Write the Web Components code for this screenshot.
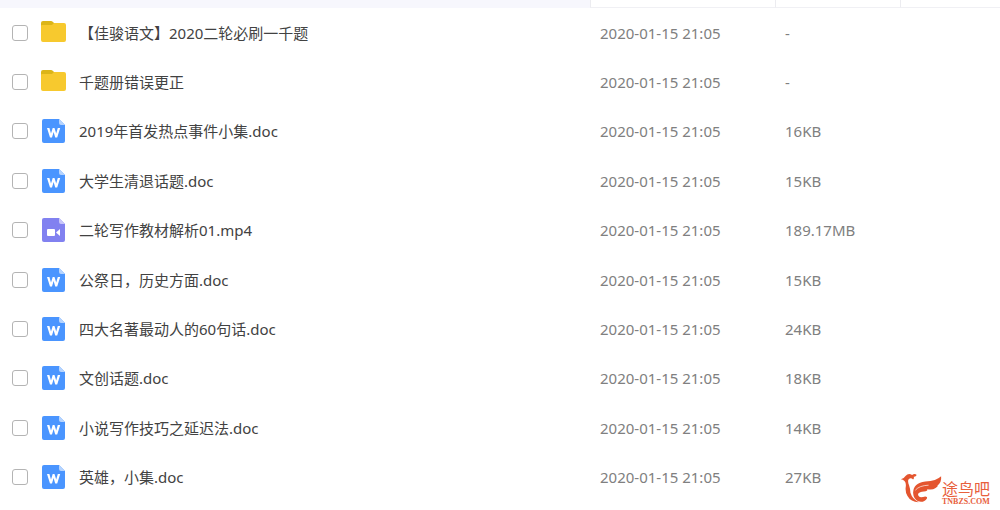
<!DOCTYPE html>
<html lang="zh-CN">
  <head>
    <meta charset="UTF-8" />
    <title>文件列表</title>
    <style>
      body {
        margin: 0;
        background: #fff;
        font-family: "Noto Sans", "Noto Sans CJK SC", sans-serif;
        font-size: 15px;
        line-height: 20px;
      }
    </style>
  </head>
  <body>
    <file-list></file-list>
    <site-mark>
      <span slot="name">途鸟吧</span>
      <span slot="domain">TNBZS.COM</span>
    </site-mark>
  </body>
  <script>
    const icons = {
      folder: `
        <path d="M0 5V2q0-2 2-2h8q1 0 2 1l2 2v4H0z" fill="#dcb518"/>
        <path d="M0 5q0-1 1-1h10l2-2h10q2 0 2 2v15q0 2-2 2H2q-2 0-2-2z" fill="#f7c92e"/>`,
      doc: `
        <path d="M3 0h15l6 6v16q0 2-2 2H3q-2 0-2-2V2q0-2 2-2z" fill="#4a95ff"/>
        <path d="M18 0l6 6h-4q-2 0-2-2z" fill="#b5d4ff"/>
        <path d="M6 9h2.400l1.600 5.500L11.700 9h1.800l1.700 5.500L16.800 9h2.400l-3 9.500h-2L12.600 13 11 18.500H9z" fill="#fff"/>`,
      video: `
        <path d="M3 0h15l6 6v16q0 2-2 2H3q-2 0-2-2V2q0-2 2-2z" fill="#8181f0"/>
        <path d="M18 0l6 6h-4q-2 0-2-2z" fill="#c8c6fa"/>
        <rect x="6" y="11" width="8" height="7" rx="1" fill="#fff"/>
        <path d="M15 14.500l4-3.500v7z" fill="#fff"/>`
    };

    // Icon for a file type
    class FileIcon extends HTMLElement {
      constructor() {
        super();
        this._shadowRoot = this.attachShadow({ mode: "open" });
      }
      connectedCallback() {
        this._shadowRoot.innerHTML = `
          <style>
            :host { display: block; flex: none; width: 26px; height: 24px; }
            svg { display: block; }
          </style>
          <svg width="26" height="24" aria-hidden="true">${icons[this.getAttribute("type")]}</svg>
        `;
      }
    }
    customElements.define("file-icon", FileIcon);

    const date = "2020-01-15 21:05";
    const files = [
      ["folder", "【佳骏语文】2020二轮必刷一千题", date, "-"],
      ["folder", "千题册错误更正", date, "-"],
      ["doc", "2019年首发热点事件小集.doc", date, "16KB"],
      ["doc", "大学生清退话题.doc", date, "15KB"],
      ["video", "二轮写作教材解析01.mp4", date, "189.17MB"],
      ["doc", "公祭日，历史方面.doc", date, "15KB"],
      ["doc", "四大名著最动人的60句话.doc", date, "24KB"],
      ["doc", "文创话题.doc", date, "18KB"],
      ["doc", "小说写作技巧之延迟法.doc", date, "14KB"],
      ["doc", "英雄，小集.doc", date, "27KB"]
    ];

    // Table of files, the rows share the window height
    class FileList extends HTMLElement {
      constructor() {
        super();
        this._shadowRoot = this.attachShadow({ mode: "open" });
        this._shadowRoot.innerHTML = `
          <style>
            :host {
              display: block;
              height: 100vh;
              min-height: 400px;
              box-sizing: border-box;
              padding-bottom: 8px;
            }
            table {
              width: 100%;
              height: 100%;
              table-layout: fixed;
              border-collapse: separate;
              border-spacing: 0;
            }
            .name { width: 59%; }
            .date { width: 18.5%; }
            .size { width: 12.5%; }
            th {
              height: 8px;
              padding: 0;
              box-sizing: border-box;
              border-bottom: 1px solid #f0f0f4;
              border-left: 1px solid #ececf0;
            }
            th:first-child {
              border: 0;
              background: #f7f7fd;
            }
            td {
              padding: 0 0 0 10px;
              color: #808080;
              white-space: nowrap;
            }
            td:first-child {
              padding-left: 12px;
              color: #424242;
            }
            .file {
              display: flex;
              align-items: center;
            }
            input {
              appearance: none;
              flex: none;
              width: 16px;
              height: 16px;
              margin: 0 13px 0 0;
              border: 1px solid #b4b4b4;
              border-radius: 3px;
              background: #fff;
            }
            input:checked { background: #4a95ff; }
            label { margin-left: 12px; }
          </style>
          <table>
            <colgroup><col class="name"><col class="date"><col class="size"><col></colgroup>
            <thead><tr><th></th><th></th><th></th><th></th></tr></thead>
            <tbody>
              ${files.map(([type, name, time, size], i) => `
                <tr>
                  <td>
                    <div class="file">
                      <input type="checkbox" id="file${i}">
                      <file-icon type="${type}"></file-icon>
                      <label for="file${i}">${name}</label>
                    </div>
                  </td>
                  <td>${time}</td>
                  <td>${size}</td>
                  <td></td>
                </tr>`).join("")}
            </tbody>
          </table>
        `;
      }
    }
    customElements.define("file-list", FileList);

    // Site mark over the bottom right corner
    class SiteMark extends HTMLElement {
      constructor() {
        super();
        this._shadowRoot = this.attachShadow({ mode: "open" });
        this._shadowRoot.innerHTML = `
          <style>
            :host {
              position: absolute;
              right: 10px;
              bottom: 4px;
              display: flex;
              align-items: flex-end;
              color: #e8603c;
            }
            svg { display: block; margin-bottom: 2px; }
            .text { display: flex; flex-direction: column; }
            .name {
              font: 16px/16px "Liberation Sans", "Noto Sans CJK SC", sans-serif;
            }
            .domain {
              font: bold 8px/8px "Liberation Serif", serif;
            }
          </style>
          <svg width="42" height="31" viewBox="27 38 124 94" aria-hidden="true">
            <g fill="#e4552f">
              <path d="M28 57Q37 55 42 47 51 37 62 44 70 38 76 44 73 50 67 49 69 55 65 58 58 50 51 58 48 64 53 76 56 84 57 98 62 116 82 127 58 126 48 108 40 94 43 78 44 67 39 62 34 58 28 57z"/>
              <path d="M65 98Q66 68 102 64 136 62 150 48 152 66 139 76 142 78 132 84 124 90 108 87 110 93 98 94 84 94 80 102 80 116 102 109 109 109 107 115 98 129 80 124 66 116 65 98z"/>
            </g>
            <path d="M72 90Q84 76 112 75" fill="none" stroke="#fff" stroke-width="2"/>
          </svg>
          <div class="text">
            <div class="name"><slot name="name"></slot></div>
            <div class="domain"><slot name="domain"></slot></div>
          </div>
        `;
      }
    }
    customElements.define("site-mark", SiteMark);
  </script>
</html>
